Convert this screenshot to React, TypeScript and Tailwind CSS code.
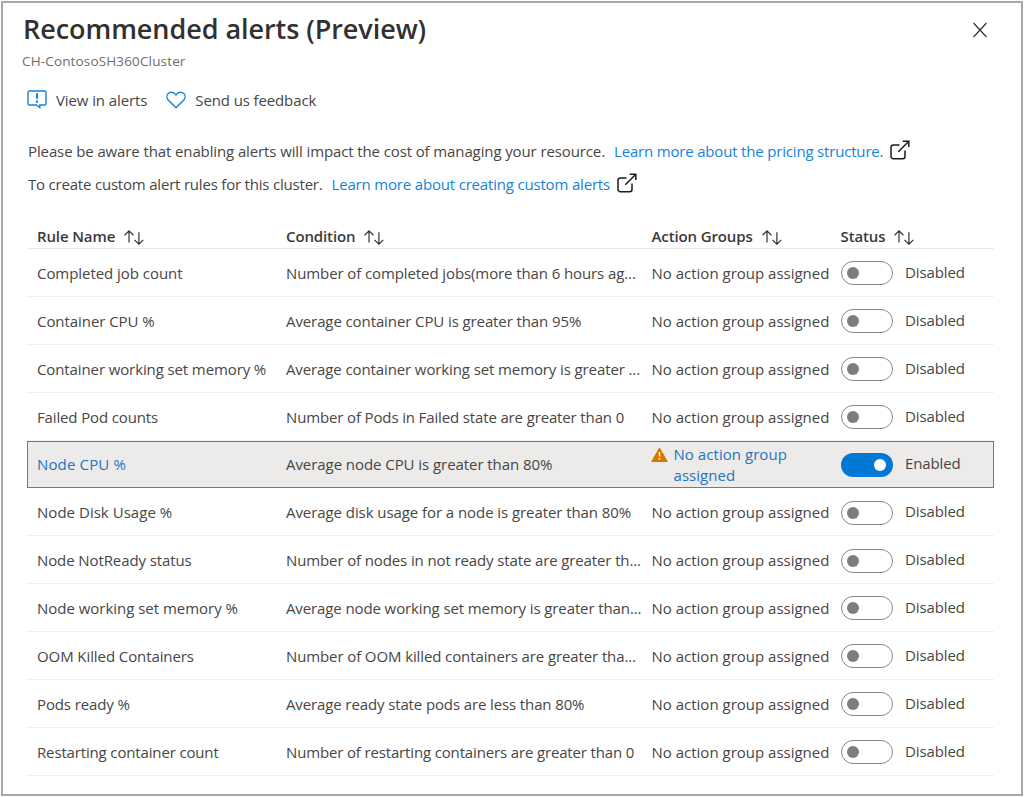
import type { ReactNode } from "react";

type Rule = { name: string; nameCls: string; condition: string; condCls: string; enabled?: boolean };

const rules: Rule[] = [
  { name: "Completed job count", nameCls: "tracking-[-0.05px]", condition: "Number of completed jobs(more than 6 hours ag...", condCls: "tracking-[-0.1px]" },
  { name: "Container CPU %", nameCls: "tracking-[-0.06px]", condition: "Average container CPU is greater than 95%", condCls: "tracking-[-0.1px]" },
  { name: "Container working set memory %", nameCls: "tracking-[-0.11px]", condition: "Average container working set memory is greater ...", condCls: "tracking-[-0.11px]" },
  { name: "Failed Pod counts", nameCls: "tracking-[-0.14px]", condition: "Number of Pods in Failed state are greater than 0", condCls: "tracking-[-0.14px]" },
  { name: "Node CPU %", nameCls: "tracking-[0.15px]", condition: "Average node CPU is greater than 80%", condCls: "tracking-[-0.06px]", enabled: true },
  { name: "Node Disk Usage %", nameCls: "tracking-[0.03px]", condition: "Average disk usage for a node is greater than 80%", condCls: "tracking-[-0.07px]" },
  { name: "Node NotReady status", nameCls: "tracking-[-0.1px]", condition: "Number of nodes in not ready state are greater th...", condCls: "tracking-[-0.12px]" },
  { name: "Node working set memory %", nameCls: "tracking-[-0.02px]", condition: "Average node working set memory is greater than...", condCls: "tracking-[-0.11px]" },
  { name: "OOM Killed Containers", nameCls: "tracking-[-0.09px]", condition: "Number of OOM killed containers are greater tha...", condCls: "tracking-[-0.11px]" },
  { name: "Pods ready %", nameCls: "tracking-[-0.12px]", condition: "Average ready state pods are less than 80%", condCls: "tracking-[-0.12px]" },
  { name: "Restarting container count", nameCls: "tracking-[-0.15px]", condition: "Number of restarting containers are greater than 0", condCls: "tracking-[-0.15px]" },
];

function ExternalIcon() {
  return (
    <svg width="20" height="20" viewBox="0 0 20 20" fill="none" stroke="#1b1b1b" strokeWidth="1.5" className="mb-[3px] shrink-0">
      <path d="M9.5 5H3.2A2.2 2.2 0 0 0 1 7.2v9.3a2.2 2.2 0 0 0 2.2 2.2h9.6a2.2 2.2 0 0 0 2.2-2.2V10.5" />
      <path d="M8.3 11.7 18.8 1.2M12.7 1.2h6.1v5.8" />
    </svg>
  );
}

function SortIcon() {
  return (
    <svg width="20" height="15" viewBox="0 0 20 15" fill="none" stroke="#323130" strokeWidth="1.2" className="mt-[2px] shrink-0">
      <path d="M5 12.5V1M.6 5.2 5 .9l4.4 4.300" />
      <path d="M14.9 2.2v12M10.5 9.9l4.400 4.300 4.400-4.300" />
    </svg>
  );
}

function Header({ children }: { children: ReactNode }) {
  return (
    <div className="flex items-center gap-[9px] font-semibold tracking-[-0.12px] text-[#3b3a39]">
      <span>{children}</span>
      <SortIcon />
    </div>
  );
}

function Toggle({ on }: { on?: boolean }) {
  return on ? (
    <span className="flex h-6 w-[52px] items-center justify-end rounded-full bg-[#0078d4] pr-[7px]">
      <span className="size-3 rounded-full bg-white" />
    </span>
  ) : (
    <span className="flex h-6 w-[52px] items-center rounded-full border border-[#8a8886] bg-white pl-[5px]">
      <span className="size-3 rounded-full bg-[#7f7d7b]" />
    </span>
  );
}

function Row({ rule }: { rule: Rule }) {
  return (
    <div
      className={
        rule.enabled
          ? "grid h-[47.9px] grid-cols-[249px_365.5px_189px_1fr] items-center bg-[#ecebea] pl-[10px] outline outline-1 -outline-offset-1 outline-[#7a7977]"
          : "grid h-[47.9px] grid-cols-[249px_365.5px_189px_1fr] items-center border-b border-[#f0efee] pt-[1.5px] pl-[10px]"
      }
    >
      <span className={rule.enabled ? `text-[#1f74bd] ${rule.nameCls}` : rule.nameCls}>{rule.name}</span>
      <span className={rule.condCls}>{rule.condition}</span>
      {rule.enabled ? (
        <span className="flex text-[#1f74bd]">
          <svg width="17" height="16" viewBox="0 0 17 16" className="mr-[6px] -ml-px mt-[3px] shrink-0">
            <path d="M8.5 1 16.300 14.500H.7z" fill="#db7500" stroke="#db7500" strokeLinejoin="round" />
            <path d="M8.500 5v4.500M8.500 11v1.700" stroke="#fff" strokeWidth="1.500" />
          </svg>
          <span className="w-[125px] leading-[21px] tracking-[0.05px] whitespace-normal">No action group assigned</span>
        </span>
      ) : (
        <span>No action group assigned</span>
      )}
      <span className="flex items-center gap-[12.5px]">
        <Toggle on={rule.enabled} />
        <span className="mb-[2px] tracking-[-0.12px]">{rule.enabled ? "Enabled" : "Disabled"}</span>
      </span>
    </div>
  );
}

export default function App() {
  return (
    <div className="h-[797px] w-[1024px] overflow-hidden bg-white p-px font-['Open_Sans',sans-serif] text-[15px] whitespace-nowrap text-[#484644]">
      <main className="h-[795px] w-[1022px] border-2 border-[#a6a7a7] pl-[20px]">
        <header className="flex justify-between">
          <div>
            <h1 className="mt-[6px] text-[27px] leading-[40px] font-semibold tracking-[-0.06px] text-[#323130]">Recommended alerts (Preview)</h1>
            <p className="mt-[2px] -ml-px text-[13.5px] leading-[20px] tracking-[0.15px] text-[#6f6d6b]">CH-ContosoSH360Cluster</p>
          </div>
          <svg width="16" height="16" viewBox="0 0 16 16" className="mt-[19px] mr-[33px]" stroke="#323130" strokeWidth="1.2">
            <path d="M1.500 1 14.500 15M14.500 1 1.500 15" />
          </svg>
        </header>
        <nav className="mt-[17px] flex h-[24px] items-center">
          <svg width="20" height="19" viewBox="0 0 20 19" fill="none" stroke="#1583d8" strokeWidth="1.4" className="mb-[2px] ml-[4px]">
            <path d="M2.300 1h15.400a1.300 1.300 0 0 1 1.300 1.300v11.400a1.300 1.300 0 0 1-1.300 1.300H12.800v2.700L9.500 15H2.300A1.300 1.300 0 0 1 1 13.700V2.300A1.300 1.300 0 0 1 2.300 1z" />
            <path d="M10 3.300v5.400M10 10.500v2.200" strokeWidth="2" />
          </svg>
          <span className="ml-[9px] tracking-[-0.1px]">View in alerts</span>
          <svg width="20" height="18" viewBox="0 0 20 18" fill="none" stroke="#1583d8" strokeWidth="1.4" className="mb-[1px] ml-[19px]">
            <path d="M10 16.800 2.200 9.100C.5 7.300.4 4.400 2.200 2.600s4.700-1.800 6.400 0L10 4l1.400-1.400c1.700-1.800 4.600-1.800 6.400 0s1.700 4.700 0 6.500z" />
          </svg>
          <span className="ml-[9px] tracking-[-0.12px]">Send us feedback</span>
        </nav>
        <section className="mt-[23px] ml-[5px]">
          <p className="flex h-[33px] items-center">
            <span className="tracking-[-0.115px]">Please be aware that enabling alerts will impact the cost of managing your resource.</span>
            <a className="mr-[7px] ml-[9px] tracking-[-0.18px] text-[#1583d8]">Learn more about the pricing structure.</a>
            <ExternalIcon />
          </p>
          <p className="flex h-[33px] items-center">
            <span className="tracking-[-0.2px]">To create custom alert rules for this cluster.</span>
            <a className="mr-[7px] ml-[9px] tracking-[-0.18px] text-[#1583d8]">Learn more about creating custom alerts</a>
            <ExternalIcon />
          </p>
        </section>
        <section className="mt-[24px] ml-[4px] w-[967px]">
          <div className="grid h-[24px] grid-cols-[249px_365.5px_189px_1fr] items-center border-b border-[#eae9e8] pl-[10px]">
            <Header>Rule Name</Header>
            <Header>Condition</Header>
            <Header>Action Groups</Header>
            <Header>Status</Header>
          </div>
          {rules.map((r) => (
            <Row key={r.name} rule={r} />
          ))}
        </section>
      </main>
    </div>
  );
}
